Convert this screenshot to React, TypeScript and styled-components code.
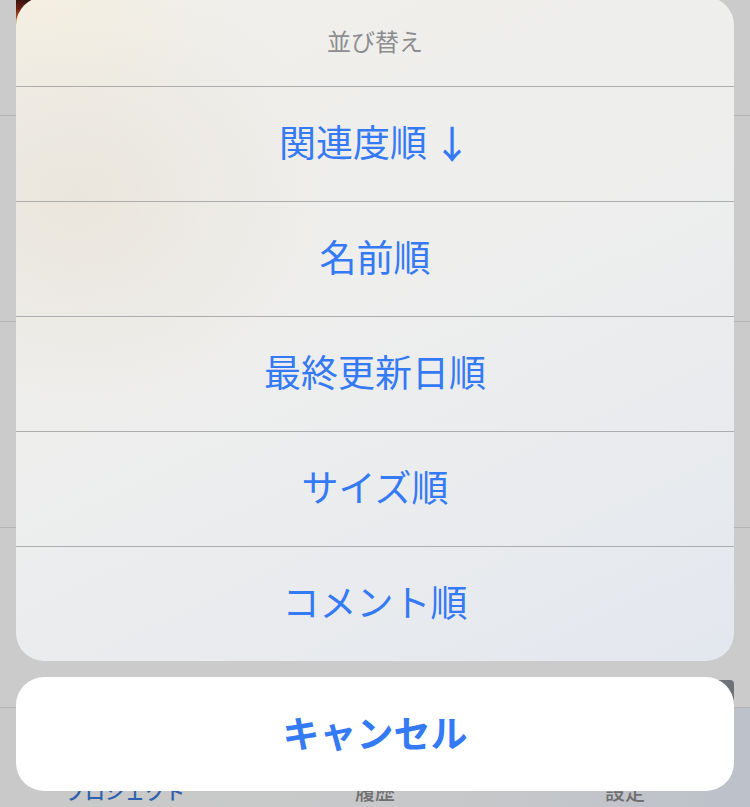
import React from 'react';
import styled, { createGlobalStyle } from 'styled-components';

const GlobalStyle = createGlobalStyle`
  html, body {
    margin: 0;
    padding: 0;
    background: #cbcbcb;
  }
  * {
    box-sizing: border-box;
  }
`;

const sortOptions = [
  { id: 'relevance', label: '関連度順', arrow: true },
  { id: 'name', label: '名前順' },
  { id: 'updated', label: '最終更新日順' },
  { id: 'size', label: 'サイズ順' },
  { id: 'comments', label: 'コメント順' },
];

const tabs = [
  { id: 'projects', label: 'プロジェクト', active: true },
  { id: 'history', label: '履歴' },
  { id: 'settings', label: '設定' },
];

function App() {
  return (
    <Screen>
      <GlobalStyle />
      <Page>
        <BgRow height={116}>
          <CornerThumb />
        </BgRow>
        <BgRow height={206} />
        <BgRow height={206} />
        <BgRow height={180}>
          <SideThumb />
        </BgRow>
        <TabBar>
          {tabs.map((tab) => (
            <Tab key={tab.id} active={tab.active}>
              {tab.label}
            </Tab>
          ))}
        </TabBar>
      </Page>

      <Sheet>
        <Group>
          <Header>並び替え</Header>
          {sortOptions.map((option) => (
            <Option key={option.id}>
              {option.label}
              {option.arrow && <Arrow>↓</Arrow>}
            </Option>
          ))}
        </Group>
        <CancelButton>キャンセル</CancelButton>
      </Sheet>
    </Screen>
  );
}

export default App;

const Screen = styled.div`
  position: relative;
  width: 750px;
  height: 807px;
  overflow: hidden;
  background: #cbcbcb;
  font-family: 'Noto Sans CJK JP', 'Noto Sans', sans-serif;
`;

const Page = styled.div`
  display: flex;
  flex-direction: column;
  height: 100%;
`;

const BgRow = styled.div<{ height: number }>`
  position: relative;
  display: flex;
  align-items: flex-end;
  justify-content: space-between;
  height: ${(p) => p.height}px;
  border-bottom: 1px solid #b5b5b5;
  flex-shrink: 0;
`;

const CornerThumb = styled.div`
  align-self: flex-start;
  margin-left: 16px;
  width: 48px;
  height: 28px;
  background: radial-gradient(
    circle at 0% 70%,
    #c85a1c 0%,
    #6a1e10 22%,
    #2a1210 45%,
    #1a0d0c 100%
  );
`;

const SideThumb = styled.div`
  margin-left: auto;
  margin-right: 16px;
  width: 60px;
  height: 27px;
  border-radius: 4px 4px 0 0;
  background: #6e737a;
`;

const TabBar = styled.nav`
  flex: 1;
  display: grid;
  grid-template-columns: repeat(3, 1fr);
  align-items: end;
  padding-bottom: 3px;
  background: linear-gradient(90deg, #c9c9c9 0%, #c7c8c9 60%, #bcc1ca 100%);
`;

const Tab = styled.div<{ active?: boolean }>`
  text-align: center;
  font-size: 20px;
  line-height: 24px;
  font-weight: 500;
  color: ${(p) => (p.active ? '#2d60ae' : '#6f6f70')};
`;

const Sheet = styled.div`
  position: absolute;
  left: 16px;
  right: 16px;
  bottom: 16px;
  display: flex;
  flex-direction: column;
  gap: 16px;
`;

const Group = styled.div`
  border-radius: 28px;
  overflow: hidden;
  background:
    radial-gradient(ellipse 260px 220px at 60px 200px, rgba(232, 226, 214, 0.7), rgba(232, 226, 214, 0) 100%),
    radial-gradient(ellipse 200px 120px at 20px 10px, rgba(245, 240, 225, 0.9), rgba(245, 240, 225, 0) 100%),
    linear-gradient(155deg, #f0efeb 0%, #eeeeed 45%, #e9ebee 75%, #e3e7ee 100%);
`;

const Header = styled.div`
  height: 89px;
  padding-bottom: 3px;
  display: flex;
  align-items: center;
  justify-content: center;
  font-size: 24px;
  color: #8d8d90;
`;

const Option = styled.div`
  height: 115px;
  padding-bottom: 6px;
  border-top: 1px solid #adadaf;
  display: flex;
  align-items: center;
  justify-content: center;
  font-size: 37px;
  color: #3479f5;
`;

const Arrow = styled.span`
  margin-left: 6px;
  font-size: 38px;
  font-weight: 500;
`;

const CancelButton = styled.div`
  height: 114px;
  padding-bottom: 5px;
  border-radius: 28px;
  background: #ffffff;
  display: flex;
  align-items: center;
  justify-content: center;
  font-size: 37px;
  font-weight: 700;
  color: #3479f5;
`;
